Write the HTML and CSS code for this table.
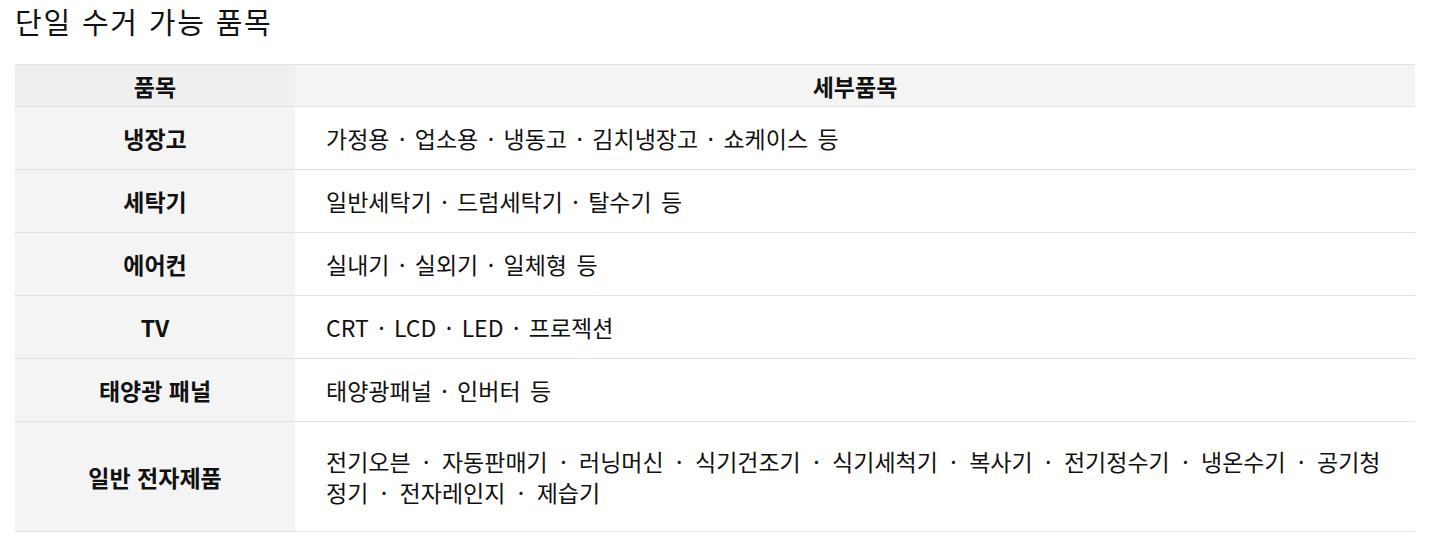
FILE: index.html
```html
<!DOCTYPE html>
<html lang="ko">
<head>
<meta charset="utf-8">
<title>단일 수거 가능 품목</title>
<link rel="stylesheet" href="styles.css">
</head>
<body>
<h2 class="title">단일 수거 가능 품목</h2>
<table class="items">
  <thead>
    <tr><th class="col-name">품목</th><th class="col-detail">세부품목</th></tr>
  </thead>
  <tbody>
    <tr><th>냉장고</th><td>가정용 · 업소용 · 냉동고 · 김치냉장고 · 쇼케이스 등</td></tr>
    <tr><th>세탁기</th><td>일반세탁기 · 드럼세탁기 · 탈수기 등</td></tr>
    <tr><th>에어컨</th><td>실내기 · 실외기 · 일체형 등</td></tr>
    <tr><th>TV</th><td>CRT · LCD · LED · 프로젝션</td></tr>
    <tr><th>태양광 패널</th><td>태양광패널 · 인버터 등</td></tr>
    <tr class="tall"><th>일반 전자제품</th><td>전기오븐 · 자동판매기 · 러닝머신 · 식기건조기 · 식기세척기 · 복사기 · 전기정수기 · 냉온수기 · 공기청정기 · 전자레인지 · 제습기</td></tr>
  </tbody>
</table>
</body>
</html>
```

FILE: styles.css
```css
html, body {
  margin: 0;
  padding: 0;
  background: #fff;
}
body {
  padding: 0 14px 0 15px;
  font-family: "Noto Sans CJK KR", "Noto Sans", sans-serif;
  color: #111;
}
.title {
  margin: 0;
  padding-top: 1px;
  font-size: 29px;
  font-weight: 400;
  letter-spacing: 1.8px;
  line-height: 40px;
  height: 63px;
}
.items {
  width: 1400px;
  border-collapse: collapse;
  table-layout: fixed;
  font-size: 23px;
}
.items th, .items td {
  border-top: 1px solid #e2e2e2;
  border-bottom: 1px solid #e2e2e2;
  padding: 0;
}
.items thead th {
  height: 41px;
  font-size: 23px;
  font-weight: 700;
  background: #f4f4f4;
  text-align: center;
}
.items thead th.col-name {
  width: 280px;
  background: #efefef;
}
.items tbody th {
  background: #f4f4f4;
  font-weight: 700;
  font-size: 23px;
  text-align: center;
  height: 62px;
}
.items tbody td {
  padding: 0 30px 0 31px;
  line-height: 31px;
  height: 62px;
  color: #111;
  word-spacing: 3px;
}
.items tbody tr.tall th,
.items tbody tr.tall td {
  height: 109px;
}
.items tbody tr.tall td {
  word-spacing: 6px;
}
```
